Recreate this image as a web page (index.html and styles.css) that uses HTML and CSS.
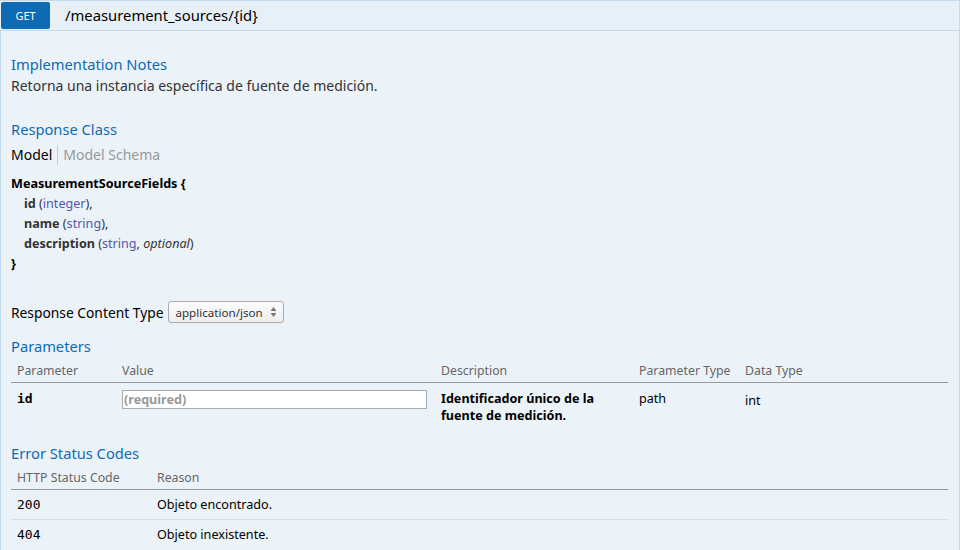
FILE: index.html
```html
<!DOCTYPE html>
<html lang="es">
<head>
<meta charset="utf-8">
<title>GET /measurement_sources/{id}</title>
<link rel="stylesheet" href="styles.css">
</head>
<body>
<div class="operation">
  <div class="op-heading">
    <span class="method">GET</span>
    <span class="path">/measurement_sources/{id}</span>
  </div>
  <div class="op-content">
    <h4 class="first">Implementation Notes</h4>
    <p class="notes">Retorna una instancia específica de fuente de medición.</p>

    <h4>Response Class</h4>
    <div class="tabs">
      <span class="tab active">Model</span>
      <span class="tab">Model Schema</span>
    </div>
    <div class="model">
      <div class="strong">MeasurementSourceFields {</div>
      <div class="prop"><span class="pname">id</span> (<span class="ptype">integer</span>),</div>
      <div class="prop"><span class="pname">name</span> (<span class="ptype">string</span>),</div>
      <div class="prop"><span class="pname">description</span> (<span class="ptype">string</span>, <em>optional</em>)</div>
      <div class="strong">}</div>
    </div>

    <div class="content-type">
      <label>Response Content Type</label>
      <div class="select"><span>application/json</span><span class="arrows"><svg width="7" height="12" viewBox="0 0 7 12"><path d="M3.5 1 L6.5 5 L0.5 5 Z" fill="#777"/><path d="M3.5 11 L6.5 7 L0.5 7 Z" fill="#777"/></svg></span></div>
    </div>

    <h4 class="params-title">Parameters</h4>
    <table class="params">
      <colgroup><col class="c1"><col class="c2"><col class="c3"><col class="c4"><col class="c5"></colgroup>
      <thead>
        <tr><th>Parameter</th><th>Value</th><th>Description</th><th>Parameter Type</th><th>Data Type</th></tr>
      </thead>
      <tbody>
        <tr>
          <td class="code strong">id</td>
          <td class="value"><input class="req" type="text" placeholder="(required)"></td>
          <td class="strong">Identificador único de la fuente de medición.</td>
          <td>path</td>
          <td class="dtype">int</td>
        </tr>
      </tbody>
    </table>

    <h4 class="err-title">Error Status Codes</h4>
    <table class="errors">
      <colgroup><col class="e1"><col class="e2"></colgroup>
      <thead>
        <tr><th>HTTP Status Code</th><th>Reason</th></tr>
      </thead>
      <tbody>
        <tr><td class="code">200</td><td>Objeto encontrado.</td></tr>
        <tr><td class="code">404</td><td>Objeto inexistente.</td></tr>
      </tbody>
    </table>
  </div>
</div>
</body>
</html>
```
FILE: styles.css
```css
html, body {
  margin: 0;
  padding: 0;
  background: #ffffff;
}
body {
  font-family: "Noto Sans", "Open Sans", sans-serif;
  color: #000;
  font-size: 14px;
}
.operation {
  width: 960px;
}
.op-heading {
  display: flex;
  align-items: center;
  height: 29px;
  background: #e7f0f7;
  border: 1px solid #c3d9ec;
  border-left: none;
  box-sizing: content-box;
  padding-left: 1px;
}
.method {
  display: inline-block;
  width: 49px;
  height: 27px;
  line-height: 28px;
  background: #0f6ab4;
  color: #fff;
  font-size: 11px;
  text-align: center;
  border-radius: 2px;
  margin-top: -1px;
}
.path {
  margin-left: 15px;
  font-size: 14.8px;
  color: #000;
  margin-top: -2px;
}
.op-content {
  background: #ebf3f9;
  border: 1px solid #c3d9ec;
  border-top: none;
  padding: 10px 10px 0 10px;
  height: 509px;
  overflow: hidden;
}
h4 {
  margin: 0;
  font-weight: normal;
  font-size: 14.7px;
  color: #0f6ab4;
  line-height: 20px;
}
h4.first { margin-top: 13px; }
.notes {
  margin: 2px 0 0;
  line-height: 20px;
  color: #333;
}
.notes + h4 { margin-top: 23px; }
h4 + .tabs { margin-top: 6px; }
.tabs {
  display: flex;
  align-items: center;
  line-height: 20px;
  height: 20px;
}
.tab {
  color: #999;
  padding-left: 5px;
}
.tab.active {
  color: #000;
  padding-left: 0;
  padding-right: 5px;
  border-right: 1px solid #ccc;
}
.model {
  margin-top: 9px;
  font-size: 12.6px;
  line-height: 20px;
  color: #333;
}
.model .strong { font-weight: bold; color: #000; }
.prop { padding-left: 13px; }
.pname { font-weight: bold; }
.ptype { color: #5555aa; }
.model em { font-style: italic; }
.content-type {
  display: flex;
  align-items: center;
  margin-top: 27px;
  height: 22px;
}
.content-type label { font-size: 13.8px; color: #000; }
.select {
  display: flex;
  align-items: center;
  justify-content: space-between;
  box-sizing: border-box;
  margin-left: 5px;
  width: 116px;
  height: 22px;
  padding: 0 6px 0 6px;
  border: 1px solid #aaa;
  border-radius: 3px;
  background: linear-gradient(#fcfcfc, #eeeeee);
  font-size: 11.6px;
  color: #333;
}
.arrows { display: flex; }
h4.params-title { margin-top: 13px; }
table {
  border-collapse: collapse;
  width: 937px;
  table-layout: fixed;
}
col.c1 { width: 105px; }
col.c2 { width: 319px; }
col.c3 { width: 198px; }
col.c4 { width: 106px; }
col.c5 { width: 209px; }
col.e1 { width: 140px; }
col.e2 { width: 797px; }
th {
  text-align: left;
  font-weight: normal;
  font-size: 12.3px;
  color: #666;
  padding: 6px 6px 3px;
  line-height: 17px;
  border-bottom: 1px solid #999;
}
td {
  vertical-align: top;
  font-size: 12.6px;
  padding: 6px 6px;
  line-height: 17px;
  border-bottom: 1px solid #ddd;
}
.params td { border-bottom: none; height: 34px; padding-top: 7px; }
.params td.value { padding-right: 8px; }
td.code {
  font-family: "DejaVu Sans Mono", monospace;
  font-size: 13px;
}
td.strong { font-weight: bold; }
.params td.dtype { padding-top: 9px; }
input.req {
  display: block;
  width: 100%;
  box-sizing: border-box;
  height: 19px;
  margin: 0;
  padding: 0 1px;
  border: 1px solid #aaa;
  background: #fff;
  font-family: "Noto Sans", sans-serif;
  font-size: 12.6px;
  font-weight: bold;
}
input.req::placeholder { color: #999; font-weight: bold; }
h4.err-title { margin-top: 11px; }
.errors th { padding-top: 6px; }
.errors td { padding: 6px 6px 6px; }
.errors tr:last-child td { border-bottom: none; }
```
